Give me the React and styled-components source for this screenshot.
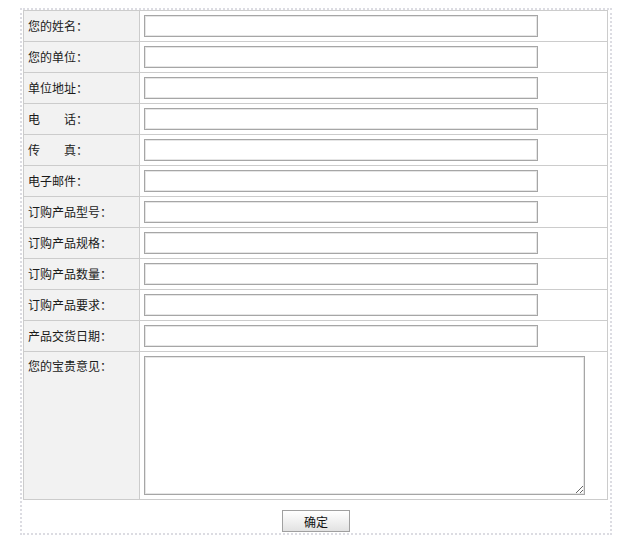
import React from "react";
import styled, { createGlobalStyle } from "styled-components";

const Global = createGlobalStyle`
  html, body { margin: 0; padding: 0; background: #fff; }
  body { font-family: "Liberation Sans", "Noto Sans CJK SC", sans-serif; font-size: 12px; color: #333; }
`;

const Page = styled.div`
  padding: 8px 0 0 20px;
`;

const Frame = styled.form`
  width: 586px;
  border: 2px dotted #dcdce2;
  padding: 0 1px 1px 1px;
  margin: 0;
`;

const Table = styled.table`
  width: 585px;
  border-collapse: collapse;
  border: 1px solid #cccccc;
`;

const Row = styled.tr``;

const Label = styled.th`
  width: 107px;
  padding: 4px 4px 4px 4px;
  text-align: left;
  vertical-align: ${(p) => (p.$top ? "top" : "middle")};
  font-weight: normal;
  font-size: 12px;
  line-height: ${(p) => (p.$top ? "20px" : "22px")};
  color: #1a1a1a;
  background: #f2f2f2;
  border: 1px solid #cccccc;
  white-space: pre;
  font-family: "Noto Sans CJK SC", sans-serif;
`;

const Field = styled.td`
  padding: 4px;
  border: 1px solid #cccccc;
  vertical-align: top;
`;

const TextInput = styled.input`
  display: block;
  box-sizing: border-box;
  width: 394px;
  height: 22px;
  margin: 0;
  padding: 1px 3px;
  border: 1px solid #a6a6a6;
  box-shadow: inset 0 0 0 1px #e6e6e6;
  background: #fff;
  font-size: 12px;
  outline: none;
`;

const TextArea = styled.textarea`
  display: block;
  box-sizing: border-box;
  width: 441px;
  height: 139px;
  margin: 0;
  padding: 2px;
  border: 1px solid #a6a6a6;
  box-shadow: inset 0 0 0 1px #e6e6e6;
  background: #fff;
  font-size: 12px;
  outline: none;
`;

const Actions = styled.div`
  display: flex;
  justify-content: center;
  padding: 10px 0 0 0;
`;

const Submit = styled.button`
  box-sizing: border-box;
  width: 68px;
  height: 22px;
  margin: 0;
  padding: 0;
  border: 1px solid #a0a0a0;
  border-radius: 0;
  background: linear-gradient(#ffffff, #e2e2e2);
  font-family: "Noto Sans CJK SC", sans-serif;
  font-size: 12px;
  color: #111;
  cursor: pointer;
`;

const fields = [
  "您的姓名：",
  "您的单位：",
  "单位地址：",
  "电　　话：",
  "传　　真：",
  "电子邮件：",
  "订购产品型号：",
  "订购产品规格：",
  "订购产品数量：",
  "订购产品要求：",
  "产品交货日期：",
];

export default function App() {
  return (
    <>
      <Global />
      <Page>
        <Frame onSubmit={(e) => e.preventDefault()}>
          <Table>
            <tbody>
              {fields.map((f) => (
                <Row key={f}>
                  <Label>{f}</Label>
                  <Field>
                    <TextInput type="text" />
                  </Field>
                </Row>
              ))}
              <Row>
                <Label $top>您的宝贵意见：</Label>
                <Field>
                  <TextArea />
                </Field>
              </Row>
            </tbody>
          </Table>
          <Actions>
            <Submit type="submit">确定</Submit>
          </Actions>
        </Frame>
      </Page>
    </>
  );
}
